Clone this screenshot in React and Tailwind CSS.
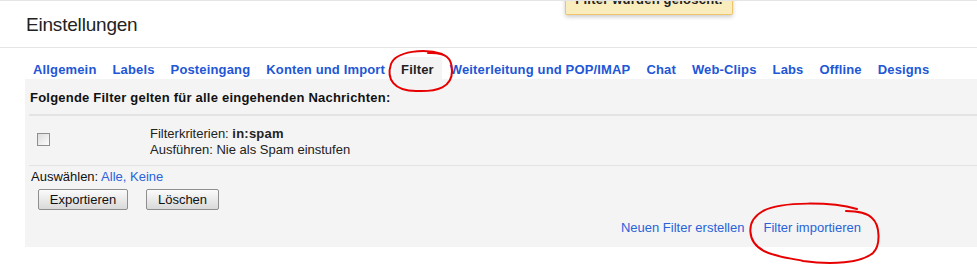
import React from 'react';

const tabs = [
  'Allgemein',
  'Labels',
  'Posteingang',
  'Konten und Import',
  'Filter',
  'Weiterleitung und POP/IMAP',
  'Chat',
  'Web-Clips',
  'Labs',
  'Offline',
  'Designs',
];

// hand-drawn red marks on top of the screenshot
function Scribbles() {
  return (
    <svg className="absolute left-0 top-0 pointer-events-none" width="977" height="280" viewBox="0 0 977 280" fill="none">
      <path
        d="M442 53 C425 47 396 50 391 63 C386 78 394 90 416 90 C438 91 452 86 452 70 C452 57 446 51 428 52"
        stroke="#e60000" strokeWidth="2" strokeLinecap="round"
      />
      <path
        d="M857 208 C832 201 782 200 763 210 C745 220 747 241 764 250 C778 257 792 257 803 260 C832 264 861 262 873 252 C881 244 880 224 872 217 C866 211 852 210 846 210"
        stroke="#e60000" strokeWidth="2" strokeLinecap="round"
      />
    </svg>
  );
}

function Btn({ children, w }) {
  return (
    <button className={`${w} h-[21px] rounded-[2px] border border-[#8e8e8e] bg-gradient-to-b from-[#fbfbfb] to-[#d9d9d9] text-[13px] leading-[19px] text-[#111]`}>
      {children}
    </button>
  );
}

export default function App() {
  return (
    <div className="relative w-[977px] h-[280px] overflow-hidden bg-white border-t border-[#e5e5e5] font-['Liberation_Sans',Arial,sans-serif] text-[13px] text-[#222]">
      {/* toast */}
      <div className="absolute left-[565px] top-[-15px] w-[168px] h-[29px] rounded-[2px] border border-[#f0c36d] bg-[#f9edbe] shadow-[0_2px_4px_rgba(0,0,0,0.2)] pt-[5px] text-center font-bold tracking-[0.22px] leading-[16px]">
        Filter wurden gelöscht.
      </div>

      {/* header */}
      <div className="h-[47px] pl-[26px] pt-[12px] border-b border-[#e5e5e5]">
        <h1 className="text-[19px] tracking-[-0.2px] leading-[24px] text-[#222]">Einstellungen</h1>
      </div>

      {/* tabs */}
      <div className="flex pl-[25px] mt-[9px]">
        {tabs.map((t) => (
          <div
            key={t}
            className={
              t === 'Filter'
                ? 'h-[22px] px-2 pt-[4px] leading-[18px] font-bold tracking-[0.15px] bg-[#f4f4f4] text-[#222]'
                : 'h-[22px] px-2 pt-[4px] leading-[18px] font-bold tracking-[0.15px] text-[#2156d6]'
            }
          >
            {t}
          </div>
        ))}
      </div>

      {/* panel */}
      <div className="ml-[25px] h-[168px] bg-[#f4f4f4] flex flex-col">
        <div className="pl-[5px] pt-[11px] pb-[8px] leading-[16px] font-bold tracking-[0.22px] text-[#111]">
          Folgende Filter gelten für alle eingehenden Nachrichten:
        </div>

        <div className="ml-[4px] border-t-2 border-b border-[#e3e3e3] flex pt-[10px] pb-[7px]">
          <div className="w-[121px] pl-[8px] pt-[7px]">
            <div className="w-[13px] h-[13px] border border-[#8f8f8f] bg-gradient-to-br from-[#dcdcdc] to-[#fdfdfd]" />
          </div>
          <div className="leading-[16px] text-[#222]">
            <div>
              Filterkriterien: <span className="font-bold tracking-[0.22px]">in:spam</span>
            </div>
            <div>Ausführen: Nie als Spam einstufen</div>
          </div>
        </div>

        <div className="pl-[6px] mt-[3px] leading-[16px] text-[#111]">
          Auswählen: <span className="text-[#2962d9]">Alle</span>
          <span className="text-[#2962d9]">, Keine</span>
        </div>

        <div className="flex gap-[18px] pl-[13px] mt-[4px]">
          <Btn w="w-[90px]">Exportieren</Btn>
          <Btn w="w-[73px]">Löschen</Btn>
        </div>

        <div className="flex justify-end gap-[19px] pr-[116px] mt-[10px] leading-[16px] text-[#2962d9]">
          <span>Neuen Filter erstellen</span>
          <span>Filter importieren</span>
        </div>
      </div>

      <Scribbles />
    </div>
  );
}
